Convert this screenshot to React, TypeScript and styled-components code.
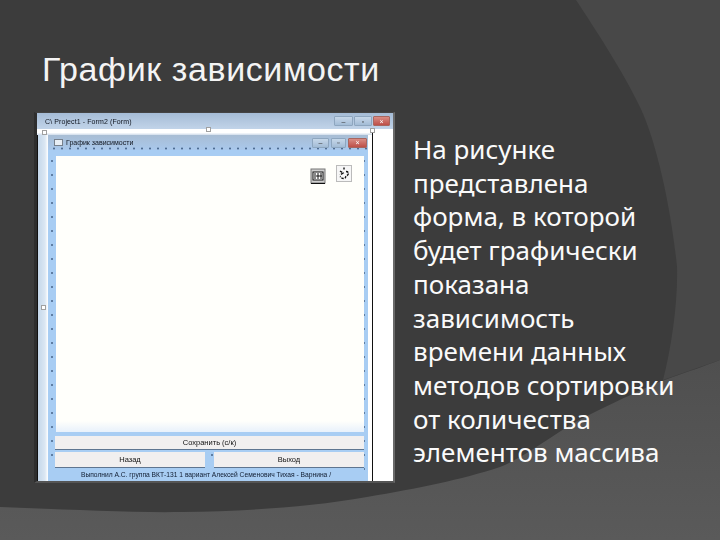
import React from "react";
import styled, { createGlobalStyle } from "styled-components";

const Global = createGlobalStyle`
  html, body { margin: 0; padding: 0; background: #3c3c3c; }
`;

const Slide = styled.div`
  position: relative;
  width: 720px;
  height: 540px;
  overflow: hidden;
  background: #3c3c3c;
  font-family: "Liberation Sans", Arial, sans-serif;
`;

const Backdrop = styled.svg`
  position: absolute;
  inset: 0;
  width: 720px;
  height: 540px;
`;

const Content = styled.div`
  position: relative;
  display: flex;
  flex-direction: column;
  padding: 49px 0 0 34px;
`;

const Title = styled.h1`
  margin: 0 0 23px 8px;
  font-weight: 400;
  font-size: 34px;
  line-height: 40px;
  letter-spacing: 0.6px;
  color: #f4f4f4;
`;

const Columns = styled.div`
  display: flex;
  align-items: flex-start;
  gap: 18px;
`;

const Shot = styled.div`
  position: relative;
  width: 361px;
  height: 371px;
  flex: none;
  display: flex;
  flex-direction: column;
  background: #fff;
  border-left: 3px solid #2e2e2e;
  border-right: 2px solid #6a6a6a;
  border-bottom: 2px solid #555;
  border-top: 1px solid #444;
  box-sizing: border-box;
  filter: blur(0.35px);
`;

const OuterTitle = styled.div`
  height: 16px;
  flex: none;
  display: flex;
  align-items: center;
  justify-content: space-between;
  padding: 0 3px 0 8px;
  background: linear-gradient(#a5bcd6, #c1d4e9);
  font-size: 7px;
  letter-spacing: 0.1px;
  color: #10151f;
`;

const Controls = styled.div<{ $gap: number }>`
  display: flex;
  gap: ${(p) => p.$gap}px;
`;

const Control = styled.span<{ $close?: boolean; $w: number }>`
  width: ${(p) => p.$w}px;
  height: 10px;
  display: flex;
  align-items: center;
  justify-content: center;
  box-sizing: border-box;
  border: 1px solid ${(p) => (p.$close ? "#a8665f" : "#8ea6bf")};
  border-radius: 1px;
  background: ${(p) => (p.$close ? "linear-gradient(#d98c84,#bd4f48)" : "linear-gradient(#c6d7e9,#a3bcd6)")};
  color: ${(p) => (p.$close ? "#fff" : "#333")};
  font-size: 7px;
  line-height: 1;
`;

const Ruler = styled.div`
  height: 6px;
  flex: none;
  margin-right: 20px;
  background: linear-gradient(#ffffff 60%, #cfdceb);
  border-right: 1px solid #111;
`;

const Stage = styled.div`
  flex: 1;
  min-height: 0;
  display: flex;
  margin-right: 20px;
  border-right: 1px solid #111;
  border-left: 1px solid #111;
`;

const Gutter = styled.div`
  width: 10px;
  flex: none;
  background: linear-gradient(90deg, #c4d7ea, #dbe7f3 70%, #fff);
`;

const FormWindow = styled.div`
  width: 320px;
  flex: none;
  display: flex;
  flex-direction: column;
  background: #a8cdf3;
`;

const FormTitle = styled.div`
  height: 15px;
  flex: none;
  display: flex;
  align-items: center;
  justify-content: space-between;
  padding: 0 1px 0 6px;
  background-image: radial-gradient(#4f6d93 0.6px, transparent 0.8px), linear-gradient(#a8bdd4, #a9c8ec);
  background-size: 8px 15px, 100% 100%;
  background-position: 2px 6px, 0 0;
  background-repeat: repeat-x, no-repeat;
  font-size: 7px;
  color: #10151f;
`;

const FormCaption = styled.span`
  display: flex;
  align-items: center;
  gap: 3px;
`;

const FormGlyph = styled.span`
  width: 7px;
  height: 5px;
  background: #e8eef5;
  border: 1px solid #77808c;
`;

const FormBody = styled.div`
  flex: 1;
  min-height: 0;
  display: flex;
  flex-direction: column;
  padding: 6px 4px 0 8px;
  background-image: radial-gradient(#5f7ea3 0.6px, transparent 0.8px);
  background-size: 8px 14px;
  background-position: 0 4px;
  background-color: #a8cdf3;
`;

const Canvas = styled.div`
  position: relative;
  height: 276px;
  flex: none;
  background: linear-gradient(#fffffb 96%, #e8f1fb);
`;

const Component = styled.svg<{ $right: number; $top: number }>`
  position: absolute;
  right: ${(p) => p.$right}px;
  top: ${(p) => p.$top}px;
  width: 16px;
  height: 17px;
`;

const Handle = styled.span<{ $x: number; $y: number }>`
  position: absolute;
  left: ${(p) => p.$x}px;
  top: ${(p) => p.$y}px;
  width: 3px;
  height: 3px;
  background: #fff;
  border: 1px solid #a0a0a0;
`;

const Wide = styled.div`
  height: 13px;
  flex: none;
  margin: 4px 0 0 -1px;
  display: flex;
  align-items: center;
  justify-content: center;
  background: #f1efef;
  border-bottom: 1px solid #5e7590;
  font-size: 7.5px;
  color: #111;
`;

const ButtonRow = styled.div`
  display: flex;
  gap: 9px;
  margin: 2px 0 0 -1px;
`;

const FormButton = styled.div`
  flex: 1;
  height: 15px;
  display: flex;
  align-items: center;
  justify-content: center;
  background: #f1efef;
  border-bottom: 1px solid #5e7590;
  font-size: 7.5px;
  color: #111;
`;

const Status = styled.div`
  flex: 1;
  display: flex;
  align-items: center;
  justify-content: center;
  margin-left: -8px;
  background: #a8cdf3;
  font-size: 6.7px;
  white-space: nowrap;
  color: #101c30;
`;

const Body = styled.p`
  margin: 21px 0 0;
  width: 268px;
  font-family: "Noto Sans", Tahoma, sans-serif;
  font-size: 26px;
  line-height: 33.7px;
  color: #fafafa;
`;

export default function App() {
  return (
    <Slide>
      <Global />
      <Backdrop viewBox="0 0 720 540" aria-hidden="true">
        <defs>
          <linearGradient id="low" x1="0" y1="0" x2="0" y2="1">
            <stop offset="0" stopColor="#4f4f4f" />
            <stop offset="1" stopColor="#5a5a5a" />
          </linearGradient>
        </defs>
        <path d="M576 0 C596 30 625 75 640 107 C658 145 672 215 677 267 C678 300 672 345 663 380 L720 360 L720 0 Z" fill="#484848" />
        <path d="M0 507 C60 509 130 513 183 512 C250 511 310 507 367 497 C420 488 460 480 500 467 C530 455 560 428 593 413 C620 400 650 385 670 378 C690 371 705 366 720 360 L720 540 L0 540 Z" fill="url(#low)" />
      </Backdrop>
      <Content>
        <Title>График зависимости</Title>
        <Columns>
          <Shot>
            <OuterTitle>
              <span>C\ Project1 - Form2 (Form)</span>
              <Controls $gap={1}>
                <Control $w={19}>–</Control>
                <Control $w={18}>▫</Control>
                <Control $w={17} $close>×</Control>
              </Controls>
            </OuterTitle>
            <Ruler />
            <Stage>
              <Gutter />
              <FormWindow>
                <FormTitle>
                  <FormCaption>
                    <FormGlyph />
                    График зависимости
                  </FormCaption>
                  <Controls $gap={2}>
                    <Control $w={17}>–</Control>
                    <Control $w={15}>▫</Control>
                    <Control $w={19} $close>×</Control>
                  </Controls>
                </FormTitle>
                <FormBody>
                  <Canvas>
                    <Component $right={38} $top={12} viewBox="0 0 16 17">
                      <rect x="1" y="1" width="14" height="14" fill="#cfcfcf" stroke="#777" />
                      <rect x="3" y="4" width="10" height="8" fill="#fff" stroke="#111" />
                      <path d="M5 5v6M8 5v6M11 5v6M6 8h6M1 15.5h14" stroke="#111" />
                    </Component>
                    <Component $right={12} $top={9} viewBox="0 0 16 17">
                      <rect x="0.5" y="0.5" width="15" height="16" fill="#f6f6f6" stroke="#bbb" />
                      <path d="M8 2.5v2M4 6l3 2-3 2M10 6.5c3 0 3 3 1 4s-1 3-3 3-3-1-4-2" fill="none" stroke="#111" strokeWidth="1.4" strokeDasharray="2.5 1" />
                    </Component>
                  </Canvas>
                  <Wide>Сохранить (с/к)</Wide>
                  <ButtonRow>
                    <FormButton>Назад</FormButton>
                    <FormButton>Выход</FormButton>
                  </ButtonRow>
                  <Status>Выполнил А.С. группа ВКТ-131 1 вариант Алексей Семенович Тихая - Варнина /</Status>
                </FormBody>
              </FormWindow>
            </Stage>
            <Handle $x={5} $y={17} />
            <Handle $x={169} $y={14} />
            <Handle $x={333} $y={15} />
            <Handle $x={4} $y={192} />
          </Shot>
          <Body>
            На рисунке представлена форма, в которой будет графически показана зависимость времени данных методов сортировки от количества элементов массива
          </Body>
        </Columns>
      </Content>
    </Slide>
  );
}
